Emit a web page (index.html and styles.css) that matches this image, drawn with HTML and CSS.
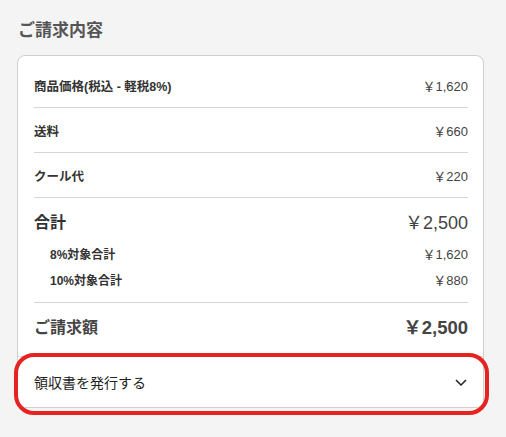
FILE: index.html
```html
<!DOCTYPE html>
<html lang="ja">
<head>
<meta charset="utf-8">
<link rel="stylesheet" href="styles.css">
</head>
<body>
<div class="page">
  <h2 class="title">ご請求内容</h2>
  <div class="card">
    <div class="items">
      <div class="row"><span class="label">商品価格(税込 - 軽税8%)</span><span class="val">￥1,620</span></div>
      <div class="row"><span class="label">送料</span><span class="val">￥660</span></div>
      <div class="row"><span class="label">クール代</span><span class="val">￥220</span></div>
      <div class="totals">
        <div class="total"><span class="tlabel">合計</span><span class="tval">￥2,500</span></div>
        <div class="sub"><span class="label">8%対象合計</span><span class="val">￥1,620</span></div>
        <div class="sub"><span class="label">10%対象合計</span><span class="val">￥880</span></div>
      </div>
      <div class="billed"><span class="blabel">ご請求額</span><span class="bval">￥2,500</span></div>
    </div>
    <div class="receipt">
      <span>領収書を発行する</span>
      <svg class="chev" width="12" height="7" viewBox="0 0 12 7"><path d="M1 1l5 5 5-5" fill="none" stroke="#222" stroke-width="1.5"/></svg>
    </div>
    <div class="highlight"></div>
  </div>
</div>
</body>
</html>
```

FILE: styles.css
```css
* { box-sizing: border-box; }
html, body { margin: 0; padding: 0; }
body {
  background: #f4f4f4;
  font-family: "Liberation Sans", "Noto Sans CJK JP", sans-serif;
  color: #333;
  width: 506px;
  height: 437px;
  overflow: hidden;
}
.page { padding: 19px 22px 0 17px; }
.title {
  margin: 0 0 12px 1px;
  font-size: 17px;
  line-height: 24px;
  font-weight: bold;
  color: #555;
}
.card {
  position: relative;
  background: #fff;
  border: 1px solid #cfcfcf;
  border-radius: 8px;
  width: 467px;
}
.items { padding: 8px 15px 0 16px; }
.row {
  display: flex;
  justify-content: space-between;
  align-items: center;
  height: 45px;
  border-bottom: 1px solid #d6d6d6;
  font-size: 12.5px;
}
.row:first-child { height: 44px; }
.label { font-weight: bold; color: #333; }
.val { color: #444; font-size: 13px; }
.totals {
  padding: 11px 0 10px;
  border-bottom: 1px solid #d6d6d6;
}
.total {
  display: flex;
  justify-content: space-between;
  align-items: center;
  height: 24px;
  color: #333;
  margin-bottom: 7px;
}
.tlabel { font-size: 16px; font-weight: bold; }
.tval { font-size: 18px; color: #444; }
.sub {
  display: flex;
  justify-content: space-between;
  align-items: center;
  height: 26px;
  padding-left: 16px;
  font-size: 12px;
}
.billed {
  display: flex;
  justify-content: space-between;
  align-items: center;
  height: 24px;
  margin: 11px 0 18px;
  font-weight: bold;
  color: #444;
}
.blabel { font-size: 16px; }
.bval { font-size: 18.5px; }
.receipt {
  display: flex;
  justify-content: space-between;
  align-items: center;
  height: 51px;
  padding: 0 16px 0 16px;
  border-top: 1px solid #d6d6d6;
  font-size: 14px;
  color: #222;
}
.chev { margin-top: 1px; }
.highlight {
  position: absolute;
  left: -4px;
  right: -6px;
  bottom: -8px;
  height: 62px;
  border: 4px solid #e52421;
  border-radius: 20px;
  pointer-events: none;
}
```
